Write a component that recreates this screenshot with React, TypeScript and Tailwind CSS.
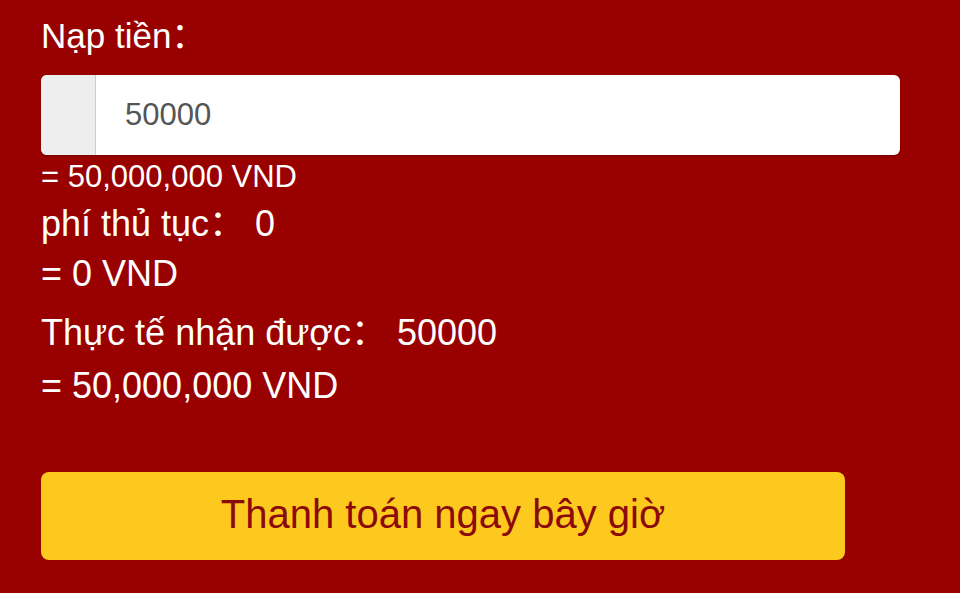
export default function App() {
  const font = { fontFamily: '"Liberation Sans", Arial, "Noto Sans CJK SC", sans-serif' };
  return (
    <div
      className="min-h-screen w-full bg-[#990000] text-white pl-[41px] pt-[11px] overflow-hidden"
      style={font}
    >
      <div className="text-[35px] leading-[50px] h-[50px] whitespace-nowrap">Nạp tiền：</div>
      <div className="mt-[14px] flex h-[80px] w-[859px] overflow-hidden rounded-[6px] bg-white shadow-[0_1px_2px_rgba(0,0,0,0.25)]">
        <div className="w-[55px] shrink-0 bg-[#eeeeee] border-r border-[#cccccc]" />
        <div className="flex items-center pl-[29px] text-[31px] text-[#555555]">50000</div>
      </div>
      <div className="mt-[2px] text-[31px] leading-[40px] h-[40px] whitespace-nowrap">= 50,000,000 VND</div>
      <div className="mt-[2px] text-[36px] leading-[50px] h-[50px] whitespace-nowrap">phí thủ tục：&nbsp;0</div>
      <div className="text-[36px] leading-[50px] h-[50px] whitespace-nowrap">= 0 VND</div>
      <div className="mt-[9px] text-[36px] leading-[50px] h-[50px] whitespace-nowrap">Thực tế nhận được：&nbsp;50000</div>
      <div className="mt-[3px] text-[36px] leading-[50px] h-[50px] whitespace-nowrap">= 50,000,000 VND</div>
      <button
        className="mt-[61px] flex h-[88px] w-[804px] items-center justify-center rounded-[8px] bg-[#fdc91f] pb-[4px] text-[40px] text-[#8b0a0a]"
        style={font}
      >
        Thanh toán ngay bây giờ
      </button>
    </div>
  );
}
